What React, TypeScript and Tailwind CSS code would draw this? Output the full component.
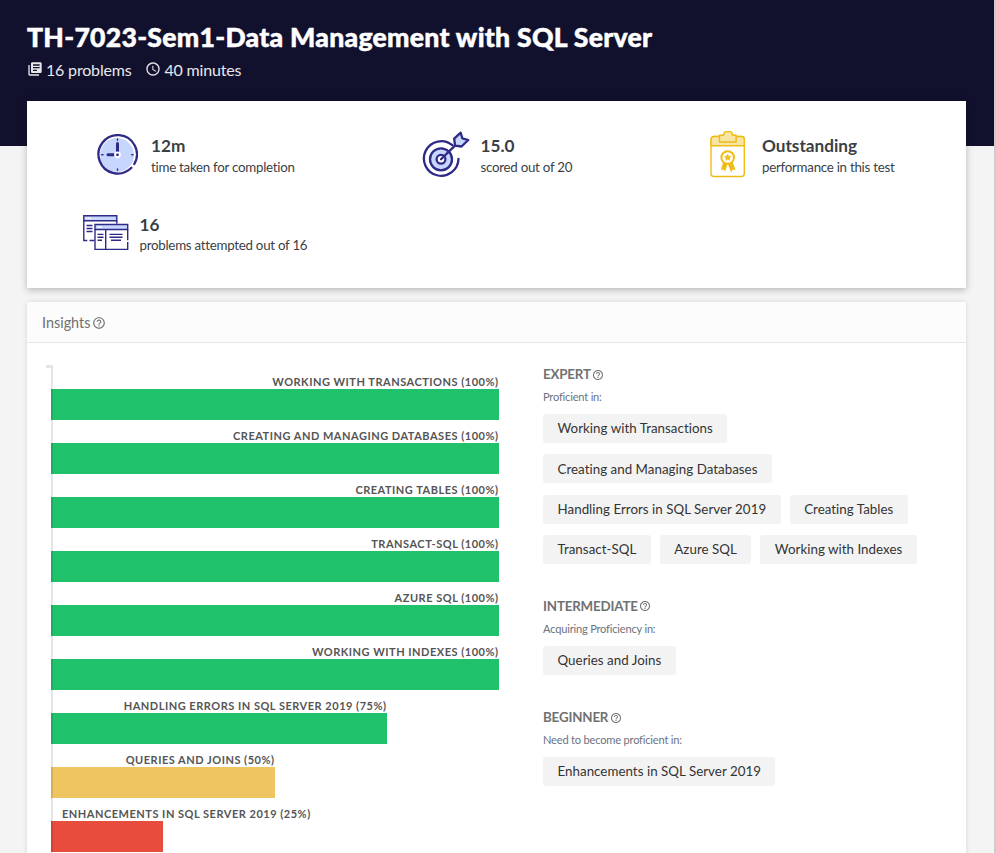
import React from "react";
import { MdAccessTime, MdHelpOutline, MdLibraryBooks } from "react-icons/md";

const skills = [
  { name: "WORKING WITH TRANSACTIONS", score: 100 },
  { name: "CREATING AND MANAGING DATABASES", score: 100 },
  { name: "CREATING TABLES", score: 100 },
  { name: "TRANSACT-SQL", score: 100 },
  { name: "AZURE SQL", score: 100 },
  { name: "WORKING WITH INDEXES", score: 100 },
  { name: "HANDLING ERRORS IN SQL SERVER 2019", score: 75 },
  { name: "QUERIES AND JOINS", score: 50 },
  { name: "ENHANCEMENTS IN SQL SERVER 2019", score: 25 },
];

function barColor(score: number) {
  if (score >= 75) return "bg-[#1fc16b]";
  if (score >= 50) return "bg-[#efc562]";
  return "bg-[#e84c3d]";
}

function ClockIcon() {
  return (
    <svg width="42" height="42" viewBox="0 0 42 42" fill="none">
      <circle cx="21" cy="21" r="17" fill="#c7d6ff" />
      <path d="M38.3 30A19.2 19.2 0 1 0 35.4 33.8" stroke="#2f2a85" strokeWidth="2.3" strokeLinecap="round" />
      <path d="M21.5 9.5v8.5M12 20.8h5.8" stroke="#2f2a85" strokeWidth="3" strokeLinecap="round" />
      <path d="M21.5 5v1.2M21.5 35v1.2M5.8 20.8h1.2M35.8 20.8h1.2" stroke="#2f2a85" strokeWidth="1.4" strokeLinecap="round" />
      <circle cx="21.5" cy="20.8" r="2.4" fill="#2f2a85" stroke="#fff" strokeWidth="2" />
    </svg>
  );
}

function TargetIcon() {
  return (
    <svg width="48" height="48" viewBox="0 0 48 48" fill="none" stroke="#2f2a85" strokeWidth="2.3" strokeLinecap="round" strokeLinejoin="round">
      <path d="M30.3 14.2A17.3 17.3 0 1 0 36.5 27.8" />
      <circle cx="19" cy="28.3" r="11" fill="#c7d6ff" />
      <circle cx="19" cy="28.3" r="4.4" fill="#fff" />
      <path d="M19 28.3 33 14.6" />
      <path d="M33 14.6 32.2 7.7 38.7 1.7 40.3 7.3 46.3 9 39.5 15.5Z" fill="#c7d6ff" />
    </svg>
  );
}

function AwardIcon() {
  return (
    <svg width="36" height="48" viewBox="0 0 36 48" fill="none" stroke="#eebb17" strokeWidth="1.4">
      <rect x="1" y="6.5" width="33.3" height="40" rx="3" fill="#fff" />
      <path d="M1 15.8V9.5a3 3 0 0 1 3-3h27.3a3 3 0 0 1 3 3v6.3Z" fill="#f7e5a3" />
      <path d="M9.5 12V5.2h4.2c0-2.5 1-3.6 2.5-3.6H20c1.5 0 2.5 1.1 2.5 3.6h3.6V12Z" fill="#f7e5a3" strokeLinejoin="round" />
      <path d="m13.5 31.5-2.7 8.5 3.2-.5 1.3 2.3 2.3-8.5 3.5 9.3 1.5-3.1 3 .5-3.4-9Z" fill="#eebb17" stroke="none" />
      <circle cx="17.7" cy="27.5" r="6.3" fill="#fff" strokeWidth="2" />
      <path d="m17.7 24 1 2.2 2.4.2-1.8 1.6.5 2.4-2.1-1.2-2.1 1.2.5-2.4-1.8-1.6 2.4-.2Z" fill="#eebb17" stroke="#eebb17" strokeWidth=".5" />
    </svg>
  );
}

function WindowsIcon() {
  return (
    <svg width="46" height="36" viewBox="0 0 46 36" fill="none" stroke="#2f2a85" strokeWidth="1.4">
      <path d="M.8.8h33v5H.8Z" fill="#c7d6ff" />
      <path d="M.8 5.8v19.7h3.5M6.5 25.5h5M33.8 5.8v3" />
      <path d="M3 3.2h5" stroke="#fff" strokeDasharray="1 1" />
      <path d="M3.5 10.5h6M3.5 13.5h6M3.5 16.5h6" />
      <path d="M12 9.5h32.7v5H12Z" fill="#c7d6ff" />
      <path d="M14 12h5" stroke="#fff" />
      <path d="M44.7 14.5v10.7M44.7 27v7.4H12V14.5M22.7 14.5v20" />
      <path d="M14.5 19.4h6M14.5 22.3h6M14.5 25.2h4.5M26.5 19.4h13M26.5 22.3h13M28 25.2h10" />
    </svg>
  );
}

function Stat({ value, label, icon, className, textClass, labelClass = "leading-[20px]" }: { value: string; label: string; icon: React.ReactNode; className: string; textClass: string; labelClass?: string }) {
  return (
    <div className={`flex items-start ${className}`}>
      {icon}
      <div className={`whitespace-nowrap text-[#3b3f45] ${textClass}`}>
        <div className="text-[17.2px] font-bold leading-[22px]">{value}</div>
        <div className={`text-[13.33px] tracking-[-0.27px] ${labelClass}`}>{label}</div>
      </div>
    </div>
  );
}

function Level({ title, subtitle, tags, className }: { title: string; subtitle: string; tags: string[]; className?: string }) {
  return (
    <section className={className}>
      <h3 className="flex h-5 items-center gap-[1.5px] text-[13.33px] font-bold tracking-[-0.17px] text-[#717171]">
        {title}
        <MdHelpOutline className="mb-px size-3" />
      </h3>
      <p className="mt-[3px] h-[17px] text-[11.1px] leading-[17px] tracking-[-0.2px] text-[#6c7280]">{subtitle}</p>
      <div className="mt-[9px] flex flex-wrap gap-x-[9px] gap-y-[11.1px]">
        {tags.map((tag) => (
          <span key={tag} className="flex h-[29.2px] items-center whitespace-nowrap rounded-[3px] bg-[#f3f3f3] px-[14.5px] pt-[1.5px] text-[13.33px] tracking-[0.03px] text-[#333]">
            {tag}
          </span>
        ))}
      </div>
    </section>
  );
}

export default function App() {
  return (
    <div className="h-[853px] overflow-hidden border-r-2 border-[#cdcdcd] bg-[#f4f4f4] font-[Lato,sans-serif]">
      <header className="h-[146px] bg-[#11112e] pl-[27px] pt-5 text-white">
        <h1 className="whitespace-nowrap text-[26.6px] font-black leading-[34px] tracking-[0.27px] [-webkit-text-stroke:0.5px_white]">TH-7023-Sem1-Data Management with SQL Server</h1>
        <div className="mt-1 flex h-6 items-center whitespace-nowrap text-[16px] tracking-[-0.18px] text-[#e7e7ea]">
          <MdLibraryBooks className="mb-0.5 size-4" />
          <span className="ml-[3px]">16 problems</span>
          <MdAccessTime className="mb-0.5 ml-[14px] size-4" />
          <span className="ml-[3px]">40 minutes</span>
        </div>
      </header>

      <main className="relative -mt-[45px] ml-[27px] w-[939px]">
        <div className="grid h-[187px] grid-cols-[326px_287px_1fr] grid-rows-[79px_1fr] bg-white pt-[30px] shadow-[0_2px_7px_rgba(0,0,0,0.25)]">
          <Stat value="12m" label="time taken for completion" className="pl-[69px]" textClass="ml-[13px] pt-1" icon={<div className="pt-[3px]"><ClockIcon /></div>} />
          <Stat value="15.0" label="scored out of 20" className="pl-[69px]" textClass="ml-[10.5px] pt-1" icon={<TargetIcon />} />
          <Stat value="Outstanding" label="performance in this test" className="pl-[69.5px]" textClass="ml-[16.5px] pt-1" icon={<div className="-mt-px"><AwardIcon /></div>} />
          <Stat value="16" label="problems attempted out of 16" className="pl-[56px]" textClass="ml-[10.5px] pt-1" labelClass="leading-[18px]" icon={<div className="pt-[5px]"><WindowsIcon /></div>} />
        </div>

        <div className="mt-[14px] h-[600px] bg-white shadow-[0_0_5px_rgba(0,0,0,0.12)]">
          <div className="flex h-[41px] items-center gap-0.5 border-b border-[#e6e6e6] bg-[#fcfcfc] pl-[15px] pt-[2px] text-[14.4px] text-[#717171]">
            Insights
            <MdHelpOutline className="size-[14px]" />
          </div>
          <div className="flex">
            <div className="relative ml-[24px] mt-[22px] w-[448px] shrink-0">
              {skills.map((skill) => (
                <div key={skill.name} className="h-[54px]">
                  <div className={`flex h-[24px] items-end whitespace-nowrap text-[11px] font-bold leading-[15px] tracking-[0.51px] text-[#555] ${skill.score === 25 ? "pl-[11px]" : "justify-end pr-[0.5px]"}`} style={{ width: `${Math.max(skill.score, 60 - skill.score * 2)}%` }}>
                    {skill.name} ({skill.score}%)
                  </div>
                  <div className={`h-[31px] ${barColor(skill.score)}`} style={{ width: `${skill.score}%` }} />
                </div>
              ))}
              <div className="absolute -left-[5px] top-0 h-[500px] w-[7px] border-r-2 border-t-[3px] border-black/10" />
            </div>
            <div className="ml-[44px] w-[405px] pt-[22px]">
              <Level
                title="EXPERT"
                subtitle="Proficient in:"
                tags={["Working with Transactions", "Creating and Managing Databases", "Handling Errors in SQL Server 2019", "Creating Tables", "Transact-SQL", "Azure SQL", "Working with Indexes"]}
              />
              <Level title="INTERMEDIATE" subtitle="Acquiring Proficiency in:" tags={["Queries and Joins"]} className="mt-[32.8px]" />
              <Level title="BEGINNER" subtitle="Need to become proficient in:" tags={["Enhancements in SQL Server 2019"]} className="mt-[33px]" />
            </div>
          </div>
        </div>
      </main>
    </div>
  );
}
